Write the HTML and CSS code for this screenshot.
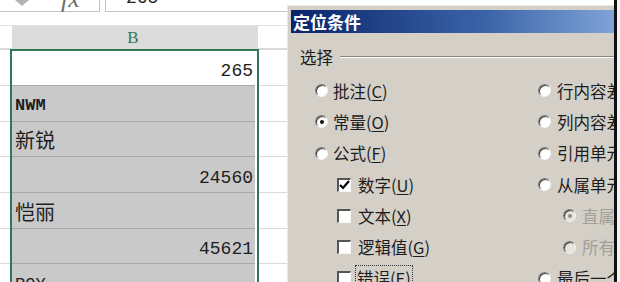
FILE: index.html
```html
<!DOCTYPE html>
<html lang="zh-CN">
<head>
<meta charset="utf-8">
<title>定位条件</title>
<link rel="stylesheet" href="styles.css">
</head>
<body>
<div class="screen">
  <div class="sheet">
    <div class="fbar">
      <div class="namebox">
        <svg class="dd" width="14" height="6" viewBox="0 0 14 6"><polygon points="0,0 14,0 7,6" fill="#b4b4b4"/></svg>
        <span class="fx">fx</span>
      </div>
      <div class="fgap"></div>
      <div class="finput"><span class="fval">265</span></div>
    </div>
    <div class="spacer"></div>
    <div class="hrow">
      <div class="lc"></div>
      <div class="hb">B</div>
      <div class="rc"></div>
    </div>
    <div class="row r1 first">
      <div class="lc"></div>
      <div class="bc"><div class="fill white num">265</div></div>
      <div class="rc"></div>
    </div>
    <div class="row r2">
      <div class="lc"></div>
      <div class="bc"><div class="fill txt bold">NWM</div></div>
      <div class="rc"></div>
    </div>
    <div class="row r3">
      <div class="lc"></div>
      <div class="bc"><div class="fill cjk">新锐</div></div>
      <div class="rc"></div>
    </div>
    <div class="row r2">
      <div class="lc"></div>
      <div class="bc"><div class="fill num">24560</div></div>
      <div class="rc"></div>
    </div>
    <div class="row r2">
      <div class="lc"></div>
      <div class="bc"><div class="fill cjk">恺丽</div></div>
      <div class="rc"></div>
    </div>
    <div class="row r3">
      <div class="lc"></div>
      <div class="bc"><div class="fill num">45621</div></div>
      <div class="rc"></div>
    </div>
    <div class="row rlast">
      <div class="lc"></div>
      <div class="bc"><div class="fill txt top">ROY</div></div>
      <div class="rc"></div>
    </div>
  </div>

  <div class="dialog">
    <div class="title">定位条件</div>
    <div class="body">
      <div class="group"><span>选择</span><div class="etch"></div></div>
      <div class="opts">
        <div class="opt l1"><i class="radio"></i><span>批注(<u>C</u>)</span></div>
        <div class="opt"><i class="radio"></i><span>行内容差异单元格(<u>W</u>)</span></div>

        <div class="opt l1"><i class="radio on"></i><span>常量(<u>O</u>)</span></div>
        <div class="opt"><i class="radio"></i><span>列内容差异单元格(<u>M</u>)</span></div>

        <div class="opt l1"><i class="radio"></i><span>公式(<u>F</u>)</span></div>
        <div class="opt"><i class="radio"></i><span>引用单元格(<u>P</u>)</span></div>

        <div class="opt l2"><i class="check"><svg width="11" height="10" viewBox="0 0 11 10"><path d="M1 5 L4 8 L10 1" stroke="#000" stroke-width="2.2" fill="none"/></svg></i><span>数字(<u>U</u>)</span></div>
        <div class="opt"><i class="radio"></i><span>从属单元格(<u>D</u>)</span></div>

        <div class="opt l2"><i class="check"></i><span>文本(<u>X</u>)</span></div>
        <div class="opt sub dis"><i class="radio on"></i><span>直属(<u>I</u>)</span></div>

        <div class="opt l2"><i class="check"></i><span>逻辑值(<u>G</u>)</span></div>
        <div class="opt sub dis"><i class="radio"></i><span>所有级别(<u>L</u>)</span></div>

        <div class="opt l2"><i class="check"></i><span class="focus">错误(<u>E</u>)</span></div>
        <div class="opt"><i class="radio"></i><span>最后一个单元格(<u>S</u>)</span></div>
      </div>
    </div>
  </div>
  <div class="bar"></div>
  <div class="edge"></div>
</div>
</body>
</html>
```

FILE: styles.css
```css
* { box-sizing: border-box; margin: 0; padding: 0; }
html, body { width: 620px; height: 282px; overflow: hidden; background: #fff; }
.screen { display: flex; height: 282px; overflow: hidden; }

/* ---------- spreadsheet ---------- */
.sheet { width: 287px; flex: none; display: flex; flex-direction: column; overflow: hidden; }
.fbar { height: 12px; flex: none; display: flex; overflow: hidden; }
.namebox { width: 100px; flex: none; display: flex; align-items: flex-start; border-right: 1px solid #c4c4c4; border-bottom: 1px solid #c4c4c4; }
.dd { margin-left: 15px; flex: none; }
.fx { font-family: "Liberation Serif", serif; font-style: italic; font-size: 26px; line-height: 26px; color: #6e6e6e; margin-left: 32px; margin-top: -14px; }
.fgap { width: 5px; flex: none; }
.finput { flex: 1; border-left: 1px solid #c4c4c4; border-bottom: 1px solid #c4c4c4; }
.fval { display: block; font-family: "Liberation Mono", monospace; font-size: 18px; line-height: 18px; color: #222; margin-left: 20px; margin-top: -11px; }
.spacer { height: 13px; flex: none; }

.hrow { display: flex; height: 24px; flex: none; border-top: 1px solid #e2e2e2; }
.hrow .lc { width: 12px; }
.hb { width: 246px; flex: none; background: #dcdcdc; color: #2d7a55; font-family: "Liberation Serif", serif; font-size: 17px; text-align: center; line-height: 23px; padding-right: 4px; }
.hrow .rc { flex: 1; }

.row { display: flex; flex: none; }
.r1 { height: 37px; }
.r2 { height: 36px; }
.r3 { height: 35px; }
.rlast { flex: 1; }
.lc { width: 10px; flex: none; border-bottom: 1px solid #dadada; }
.rc { flex: 1; border-bottom: 1px solid #dadada; }
.first .lc, .first .rc { border-top: 1px solid #d6d6d6; }
.rlast .lc, .rlast .rc { border-bottom: none; }
.bc { width: 249px; flex: none; display: flex; border-left: 2px solid #2f7a56; border-right: 2px solid #2f7a56; padding-right: 2px; }
.first .bc { border-top: 2px solid #2f7a56; }
.fill { flex: 1; background: #c9c9c9; border-bottom: 1px solid #a9a9a9; display: flex; align-items: flex-end; padding: 0 2px 4px 3px; color: #1e1e1e; }
.fill.white { background: #fff; }
.num { justify-content: flex-end; font-family: "Liberation Mono", monospace; font-size: 18px; line-height: 20px; }
.txt { font-family: "Liberation Mono", monospace; font-size: 17px; line-height: 20px; }
.bold { font-weight: bold; padding-bottom: 5px; }
.cjk { font-family: "Noto Sans CJK SC", sans-serif; font-size: 20px; line-height: 26px; padding-bottom: 3px; }
.top { align-items: flex-start; padding-top: 11px; border-bottom: none; }

/* ---------- dialog ---------- */
.dialog { width: 327px; flex: none; margin-top: 5px; background: #d4d0c8; border-left: 1px solid #ebe9e4; border-top: 1px solid #ebe9e4; padding: 4px 0 0 3px; overflow: hidden; font-family: "Noto Sans CJK SC", sans-serif; font-size: 16.5px; color: #1c1c1c; }
.title { height: 23px; background: linear-gradient(to right, #0a246a 0%, #3a64a8 60%, #7fa3d8 100%); color: #fff; font-weight: bold; font-size: 17px; line-height: 23px; padding-left: 2px; white-space: nowrap; }
.body { padding-left: 9px; }
.group { display: flex; align-items: center; height: 20px; margin-top: 14px; white-space: nowrap; }
.etch { flex: 1; height: 2px; border-top: 1px solid #8a8780; border-bottom: 1px solid #fbfbfa; margin-left: 7px; }
.opts { display: grid; grid-template-columns: 238px 200px; grid-auto-rows: 31.3px; margin-top: 8px; }
.opt { display: flex; align-items: center; white-space: nowrap; }
.opt u { text-decoration: underline; text-underline-offset: 2px; }
.l1 { padding-left: 15px; }
.l2 { padding-left: 37px; }
.sub { padding-left: 25px; }
.dis { color: #a19e97; }
.radio { width: 13px; height: 13px; flex: none; border-radius: 50%; background: #fff; border: 1px solid; border-color: #7d7a74 #f4f3f1 #f4f3f1 #7d7a74; box-shadow: inset 1px 1px 0 #3c3c3c; margin-right: 5px; display: flex; align-items: center; justify-content: center; }
.radio.on::after { content: ""; width: 4px; height: 4px; border-radius: 50%; background: #111; }
.dis .radio { background: #e6e4df; }
.dis .radio.on::after { background: #8f8c86; }
.opts > .opt:nth-child(even) .radio { margin-right: 6px; }
.sub .radio { margin-right: 7px; }
.check { width: 14px; height: 14px; flex: none; background: #fff; border-top: 2px solid #555; border-left: 2px solid #555; border-right: 1px solid #f6f6f6; border-bottom: 1px solid #f6f6f6; margin-right: 7px; display: flex; align-items: center; justify-content: center; }
.focus { outline: 1px dotted #333; outline-offset: 0; padding: 0 1px; margin-left: -2px; }

.bar { width: 3px; flex: none; background: #111; }
.edge { flex: 1; background: #f3f3f3; }
```
